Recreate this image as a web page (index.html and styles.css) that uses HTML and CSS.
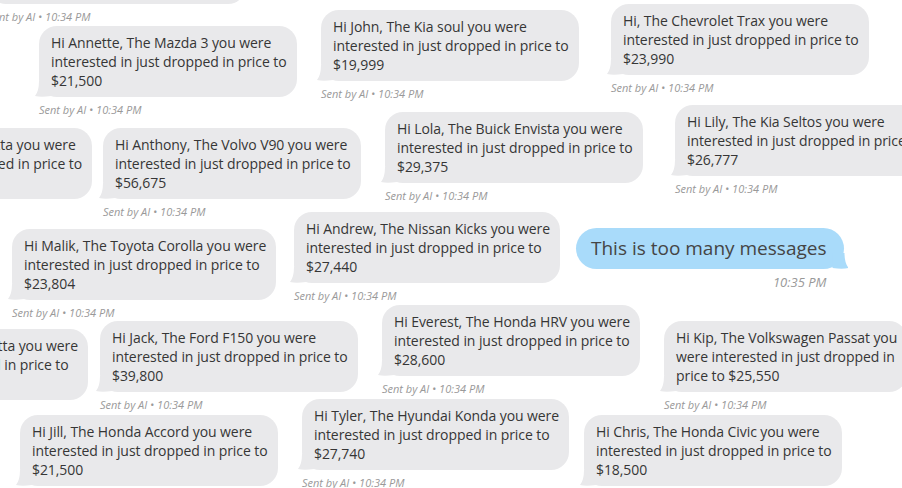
FILE: index.html
```html
<!DOCTYPE html>
<html lang="en">
<head>
<meta charset="utf-8">
<title>Messages</title>
<link rel="stylesheet" href="styles.css">
</head>
<body>
<div class="canvas">
  <div class="msg" style="left:-12px;top:-67px">
    <div class="bubble">Hi Sam, The Jeep Compass you were<br>interested in just dropped in price to<br>$24,500</div>
    <div class="meta">Sent by AI • 10:34 PM</div>
  </div>
  <div class="msg" style="left:39px;top:26px">
    <div class="bubble">Hi Annette, The Mazda 3 you were<br>interested in just dropped in price to<br>$21,500</div>
    <div class="meta">Sent by AI • 10:34 PM</div>
  </div>
  <div class="msg" style="left:321px;top:10px">
    <div class="bubble">Hi John, The Kia soul you were<br>interested in just dropped in price to<br>$19,999</div>
    <div class="meta">Sent by AI • 10:34 PM</div>
  </div>
  <div class="msg" style="left:611px;top:4px">
    <div class="bubble">Hi, The Chevrolet Trax you were<br>interested in just dropped in price to<br>$23,990</div>
    <div class="meta">Sent by AI • 10:34 PM</div>
  </div>
  <div class="msg" style="right:810px;top:128px">
    <div class="bubble">Hi Henrietta, The VW Jetta you were<br>interested in just dropped in price to<br>$22,995</div>
    <div class="meta">Sent by AI • 10:34 PM</div>
  </div>
  <div class="msg" style="left:103px;top:128px">
    <div class="bubble">Hi Anthony, The Volvo V90 you were<br>interested in just dropped in price to<br>$56,675</div>
    <div class="meta">Sent by AI • 10:34 PM</div>
  </div>
  <div class="msg" style="left:385px;top:112px">
    <div class="bubble">Hi Lola, The Buick Envista you were<br>interested in just dropped in price to<br>$29,375</div>
    <div class="meta">Sent by AI • 10:34 PM</div>
  </div>
  <div class="msg" style="left:675px;top:105px">
    <div class="bubble">Hi Lily, The Kia Seltos you were<br>interested in just dropped in price to<br>$26,777</div>
    <div class="meta">Sent by AI • 10:34 PM</div>
  </div>
  <div class="msg" style="left:12px;top:229px">
    <div class="bubble">Hi Malik, The Toyota Corolla you were<br>interested in just dropped in price to<br>$23,804</div>
    <div class="meta">Sent by AI • 10:34 PM</div>
  </div>
  <div class="msg" style="left:294px;top:212px">
    <div class="bubble">Hi Andrew, The Nissan Kicks you were<br>interested in just dropped in price to<br>$27,440</div>
    <div class="meta">Sent by AI • 10:34 PM</div>
  </div>
  <div class="msg out" style="left:576px;top:228px">
    <div class="bubble blue">This is too many messages</div>
    <div class="meta">10:35 PM</div>
  </div>
  <div class="msg" style="right:814px;top:329px">
    <div class="bubble">Hi Christopher, The VW Jetta you were<br>interested in just dropped in price to<br>$22,995</div>
    <div class="meta">Sent by AI • 10:34 PM</div>
  </div>
  <div class="msg" style="left:100px;top:321px">
    <div class="bubble">Hi Jack, The Ford F150 you were<br>interested in just dropped in price to<br>$39,800</div>
    <div class="meta">Sent by AI • 10:34 PM</div>
  </div>
  <div class="msg" style="left:382px;top:305px">
    <div class="bubble">Hi Everest, The Honda HRV you were<br>interested in just dropped in price to<br>$28,600</div>
    <div class="meta">Sent by AI • 10:34 PM</div>
  </div>
  <div class="msg" style="left:664px;top:321px">
    <div class="bubble">Hi Kip, The Volkswagen Passat you<br>were interested in just dropped in<br>price to $25,550</div>
    <div class="meta">Sent by AI • 10:34 PM</div>
  </div>
  <div class="msg" style="left:20px;top:415px">
    <div class="bubble">Hi Jill, The Honda Accord you were<br>interested in just dropped in price to<br>$21,500</div>
    <div class="meta">Sent by AI • 10:34 PM</div>
  </div>
  <div class="msg" style="left:302px;top:399px">
    <div class="bubble">Hi Tyler, The Hyundai Konda you were<br>interested in just dropped in price to<br>$27,740</div>
    <div class="meta">Sent by AI • 10:34 PM</div>
  </div>
  <div class="msg" style="left:584px;top:415px">
    <div class="bubble">Hi Chris, The Honda Civic you were<br>interested in just dropped in price to<br>$18,500</div>
    <div class="meta">Sent by AI • 10:34 PM</div>
  </div>
</div>
</body>
</html>
```
FILE: styles.css
```css
html, body {
  margin: 0;
  padding: 0;
  background: #ffffff;
}

body {
  font-family: "Open Sans", "Liberation Sans", sans-serif;
  color: #333333;
}

.canvas {
  position: relative;
  width: 902px;
  height: 488px;
  overflow: hidden;
  background: #ffffff;
}

.msg {
  position: absolute;
  display: flex;
  flex-direction: column;
  align-items: flex-start;
}

.bubble {
  position: relative;
  background: #e9e9eb;
  color: #363636;
  font-size: 14px;
  line-height: 19px;
  letter-spacing: -0.08px;
  padding: 7px 10px 7px 12px;
  border-radius: 18px;
  white-space: nowrap;
}

.bubble::before {
  content: "";
  position: absolute;
  left: -4px;
  bottom: 0;
  width: 16px;
  height: 16px;
  background: inherit;
  clip-path: path("M4 0 Q4 10 0 15 Q6 16.6 16 15 L16 0 Z");
}

.meta {
  margin-top: 6px;
  font-size: 11px;
  line-height: 14px;
  font-style: italic;
  color: #999999;
  white-space: nowrap;
}

.msg.out {
  align-items: stretch;
}

.bubble.blue {
  background: #a9dbfa;
  color: #454545;
  font-size: 19px;
  line-height: 25px;
  letter-spacing: 0;
  padding: 8px 18px 8px 15px;
  border-radius: 21px;
}

.bubble.blue::before {
  left: auto;
  right: -4px;
  clip-path: path("M12 0 Q12 10 16 15 Q10 16.6 0 15 L0 0 Z");
}

.msg.out .meta {
  text-align: right;
  padding-right: 18px;
  font-size: 13px;
  line-height: 16px;
  margin-top: 5px;
}
```
